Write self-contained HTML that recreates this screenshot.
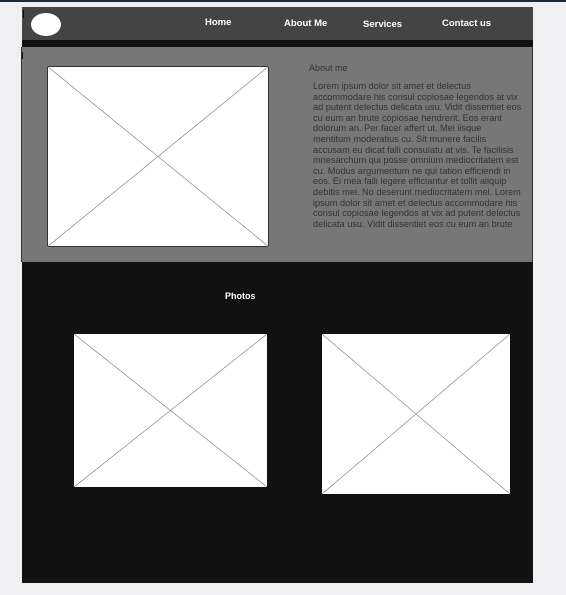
<!DOCTYPE html><html><head><style>
*{margin:0;padding:0;box-sizing:border-box}
body{width:566px;height:595px;background:#f0f0f2;position:relative;overflow:hidden;font-family:"Liberation Sans",sans-serif}
.a{position:absolute}
.nav{color:#fff;font-weight:bold;font-size:9.5px}
svg{position:absolute;background:#fff}
</style></head><body>
<div class="a" style="left:0;top:0;width:566px;height:2px;background:#1e2a3a"></div>
<div class="a" style="left:22px;top:7px;width:511px;height:34px;background:#444"></div>
<div class="a" style="left:23px;top:10px;width:1px;height:8px;background:#111"></div>
<div class="a" style="left:31px;top:13px;width:30px;height:23px;border-radius:50%;background:#fff"></div>
<div class="a nav" style="left:205px;top:17px">Home</div>
<div class="a nav" style="left:284px;top:18px">About Me</div>
<div class="a nav" style="left:363px;top:19px">Services</div>
<div class="a nav" style="left:442px;top:18px">Contact us</div>
<div class="a" style="left:22px;top:40px;width:511px;height:7px;background:#111"></div>
<div class="a" style="left:21px;top:47px;width:512px;height:215px;background:#777;border-left:1px solid #333;border-right:1px solid #333"></div>
<div class="a" style="left:22px;top:52px;width:1px;height:7px;background:#111"></div>
<svg style="left:47px;top:66px" width="222" height="181"><rect x=".5" y=".5" width="221" height="180" fill="none" stroke="#333"/><path d="M0 0L222 181M222 0L0 181" stroke="#888" stroke-width=".7"/></svg>
<div class="a" style="left:309px;top:63px;font-size:9px;color:#333">About me</div>
<div class="a" style="left:313px;top:81px;white-space:nowrap;font-size:9.2px;line-height:10.6px;color:#333">Lorem ipsum dolor sit amet et delectus<br>accommodare his consul copiosae legendos at vix<br>ad putent delectus delicata usu. Vidit dissentiet eos<br>cu eum an brute copiosae hendrerit. Eos erant<br>dolorum an. Per facer affert ut. Mei iisque<br>mentitum moderatius cu. Sit munere facilis<br>accusam eu dicat falli consulatu at vis. Te facilisis<br>mnesarchum qui posse omnium mediocritatem est<br>cu. Modus argumentum ne qui tation efficiendi in<br>eos. Ei mea falli legere efficiantur et tollit aliquip<br>debitis mei. No deserunt mediocritatem mel. Lorem<br>ipsum dolor sit amet et delectus accommodare his<br>consul copiosae legendos at vix ad putent delectus<br>delicata usu. Vidit dissentiet eos cu eum an brute</div>
<div class="a" style="left:22px;top:262px;width:511px;height:321px;background:#111"></div>
<div class="a nav" style="left:225px;top:291px;font-size:9px">Photos</div>
<svg style="left:74px;top:334px" width="193" height="153"><path d="M0 0L193 153M193 0L0 153" stroke="#888" stroke-width=".7"/></svg>
<svg style="left:322px;top:334px" width="188" height="160"><path d="M0 0L188 160M188 0L0 160" stroke="#888" stroke-width=".7"/></svg>
</body></html>
